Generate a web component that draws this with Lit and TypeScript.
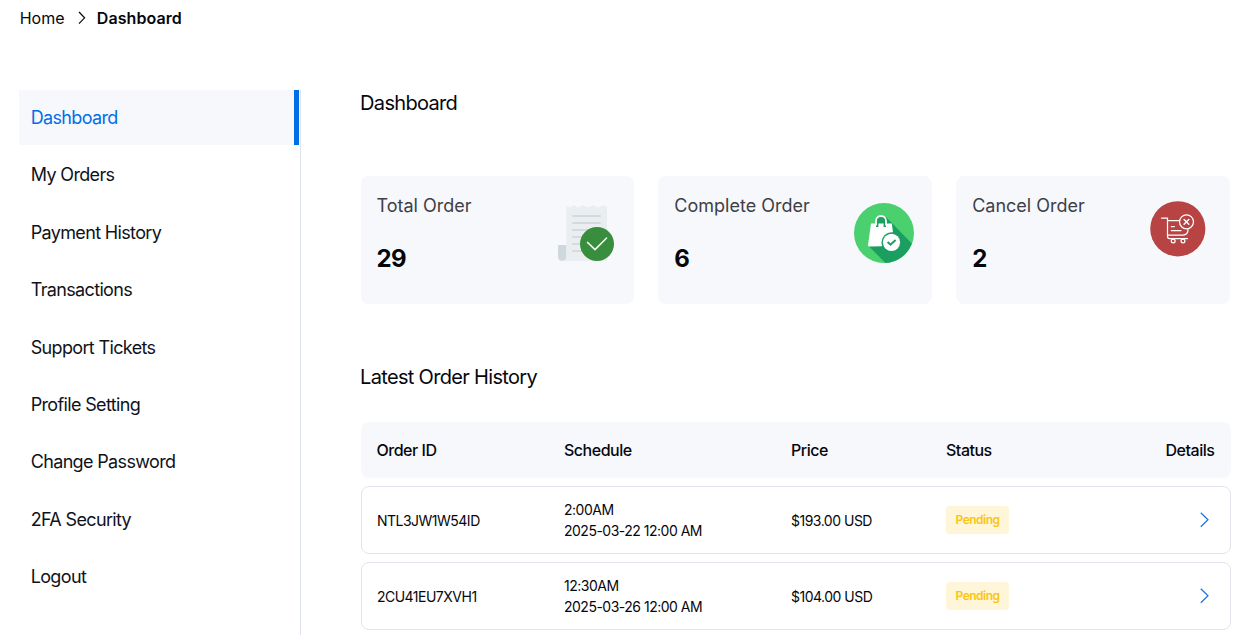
import { LitElement, html, svg, css } from "lit";
import { customElement, property } from "lit/decorators.js";

const receiptIcon = svg`
  <path fill="#ebeef1" d="M8.2 .8 11.6 2.4 15.8 .2 20 2.4 25 .2 30 2.4 35 .2 40 2.4 45 .2 49 1.2V56H3.5C6.5 56 8.2 54 8.2 51Z"/>
  <path fill="#cfd8dd" d="M0 40H8.2V51.8A4.1 4.1 0 0 1 0 51.8Z"/>
  <path stroke="#d3dbdf" stroke-width="2" stroke-linecap="round" d="M15 11H42M15 18H42M15 25H42M15 32H42M15 39H42M15 46H42"/>
  <circle cx="39" cy="39" r="17" fill="#388e3c"/>
  <path fill="none" stroke="#f4f6f5" stroke-width="1.5" stroke-linecap="round" stroke-linejoin="round" d="M29.5 37.4 37 44.6 48.6 33"/>`;

const bagIcon = svg`
  <circle cx="30" cy="30" r="30" fill="#4bd070"/>
  <path fill="#1a9f60" d="M32 14 57.8 40.5A30 30 0 0 1 31.5 60L15 43.5 30 30Z"/>
  <path fill="#1a9f60" d="M22 22V18A5 5 0 0 1 32 18V22Z"/>
  <path fill="#fff" d="M17 20.5H37.8L39 29.5C31 30.5 27 35 28 43.2L15.2 43.5A1.2 1.2 0 0 1 14 42.2Z"/>
  <path fill="none" stroke="#1a9f60" stroke-width="2.4" d="M23.2 20V24M30.8 20V24"/>
  <path fill="none" stroke="#fff" stroke-width="1.8" d="M22 22.6V18A5 5 0 0 1 32 18V22.6"/>
  <circle cx="37.5" cy="39.3" r="10" fill="#1a9f60"/>
  <circle cx="37.5" cy="39.3" r="8.6" fill="#fff"/>
  <path fill="none" stroke="#1a9f60" stroke-width="1.9" d="M33.6 39 36.5 41.8 41.6 37"/>`;

const cartIcon = svg`
  <circle cx="27.8" cy="27.8" r="27.6" fill="#b74343"/>
  <g fill="none" stroke="#fff" stroke-width="1.25" stroke-linecap="round" stroke-linejoin="round">
    <path d="M11.5 17H17.5V35.5Q17.5 37.5 19.5 37.5H37.5M17.5 19.7H29.5M38 28.5Q38 32.5 35.5 33.4Q34.5 34 33 34H18"/>
    <path d="M21.3 25.7H24.3M21.3 29.6H31"/>
    <circle cx="23.2" cy="40" r="1.9"/><circle cx="33" cy="40" r="1.9"/>
    <circle cx="36.5" cy="20.8" r="7"/>
    <path stroke-width="1.5" d="M34.1 18.5 38.8 23.2M38.8 18.5 34.1 23.2"/>
  </g>`;

const chevron = (size: "small" | "large") =>
  size === "small"
    ? html`<svg class="chev" width="8" height="14" viewBox="0 0 8 14"><path d="M1 1 6.6 6.8 1 12.6" /></svg>`
    : html`<svg class="chev" width="9" height="16" viewBox="0 0 9 16"><path d="M.8 .7 8 7.7 .8 14.7" /></svg>`;

const chevronStyle = css`
  .chev { display: block; fill: none; stroke: currentColor; stroke-width: 1.2; }
`;

@customElement("stat-card")
class StatCard extends LitElement {
  @property() label = "";
  @property({ type: Number }) count = 0;
  @property() kind = "total";
  static styles = css`
    :host { display: flex; justify-content: space-between; height: 128px; box-sizing: border-box;
      padding: 16px 16px 0; background: #f6f8fc; border-radius: 8px; }
    .label { font-size: 18px; line-height: 28px; color: #3e4046; }
    .count { font-size: 24px; line-height: 32px; font-weight: 700; letter-spacing: -0.5px; margin-top: 23px; color: #06070c; }
    .icon { display: block; flex: none; }
    .total { margin: 13px 4px 0 0; }
    .complete { margin: 11px 2px 0 0; }
    .cancel { margin: 9px 8px 0 0; }
  `;
  render() {
    const w = this.kind === "complete" ? 60 : 56;
    const art = this.kind === "total" ? receiptIcon : this.kind === "complete" ? bagIcon : cartIcon;
    return html`
      <div>
        <div class="label">${this.label}</div>
        <div class="count">${this.count}</div>
      </div>
      <svg class="icon ${this.kind}" width=${w} height=${w} viewBox="0 0 ${w} ${w}">${art}</svg>`;
  }
}

const links = ["Dashboard", "My Orders", "Payment History", "Transactions", "Support Tickets",
  "Profile Setting", "Change Password", "2FA Security", "Logout"];

const orders = [
  { id: "NTL3JW1W54ID", time: "2:00AM", date: "2025-03-22 12:00 AM", price: "$193.00 USD", status: "Pending" },
  { id: "2CU41EU7XVH1", time: "12:30AM", date: "2025-03-26 12:00 AM", price: "$104.00 USD", status: "Pending" },
];

@customElement("app-root")
class AppRoot extends LitElement {
  static styles = [chevronStyle, css`
    :host { display: block; height: 635px; overflow: hidden; background: #fff;
      font-family: Inter, "Liberation Sans", sans-serif; color: #06070c; }
    .crumbs { display: flex; align-items: center; height: 24px; padding: 6px 0 0 19.7px; font-size: 16px; }
    .crumbs .chev { margin: 0 11.3px 0 13px; }
    .crumbs b { font-weight: 600; letter-spacing: 0.08px; }
    .layout { display: flex; padding: 60px 14px 0 19px; }
    .side { width: 281px; height: 600px; flex: none; border-right: 1px solid #dfe3ec;
      display: flex; flex-direction: column; gap: 2.4px; }
    .link { height: 55px; flex: none; box-sizing: border-box; margin-right: 1px; padding-left: 11.7px;
      line-height: 55px; font-size: 18px; letter-spacing: -0.65px; color: #10121a; }
    .link.active { background: #f6f8fc; color: #006fe6; border-right: 5px solid #006fe6; }
    .main { flex: 1; margin-left: 59.5px; min-width: 0; }
    h2 { margin: 0 0 0 -0.4px; font-size: 20px; line-height: 26px; font-weight: 400; letter-spacing: -0.68px; }
    .cards { display: grid; grid-template-columns: repeat(3, 1fr); gap: 24px; margin: 60px 1px 60px 0; }
    .row { display: grid; grid-template-columns: 187.5px 227px 155px 1fr auto; align-items: center;
      box-sizing: border-box; padding: 0 16px; border-radius: 8px; }
    .head { height: 56px; margin-top: 32px; padding-right: 16.6px; background: #f6f8fc; font-size: 16px;
      font-weight: 500; letter-spacing: -0.48px; }
    .order { height: 68px; margin-top: 8px; padding: 0 20.8px 0 15px; border: 1px solid #e2e5ee; font-size: 14px;
      line-height: 21px; letter-spacing: -0.5px; }
    .order > .id { padding-left: 0.4px; }
    .badge { display: inline-block; padding: 0 9.5px; height: 28px; line-height: 28px; border-radius: 4px;
      background: #fff5d8; color: #f9c515; font-size: 12px; font-weight: 600; letter-spacing: -0.5px; vertical-align: middle; }
    .go { color: #1473e0; }
  `];
  render() {
    return html`
      <nav class="crumbs"><span>Home</span>${chevron("small")}<b>Dashboard</b></nav>
      <div class="layout">
        <aside class="side">
          ${links.map((l, i) => html`<div class="link ${i === 0 ? "active" : ""}">${l}</div>`)}
        </aside>
        <main class="main">
          <h2>Dashboard</h2>
          <section class="cards">
            <stat-card label="Total Order" count="29" kind="total"></stat-card>
            <stat-card label="Complete Order" count="6" kind="complete"></stat-card>
            <stat-card label="Cancel Order" count="2" kind="cancel"></stat-card>
          </section>
          <h2>Latest Order History</h2>
          <div class="row head">
            <span>Order ID</span><span>Schedule</span><span>Price</span><span>Status</span><span>Details</span>
          </div>
          ${orders.map((o) => html`
            <div class="row order">
              <span class="id">${o.id}</span>
              <span>${o.time}<br />${o.date}</span>
              <span>${o.price}</span>
              <span><span class="badge">${o.status}</span></span>
              <span class="go">${chevron("large")}</span>
            </div>`)}
        </main>
      </div>`;
  }
}
